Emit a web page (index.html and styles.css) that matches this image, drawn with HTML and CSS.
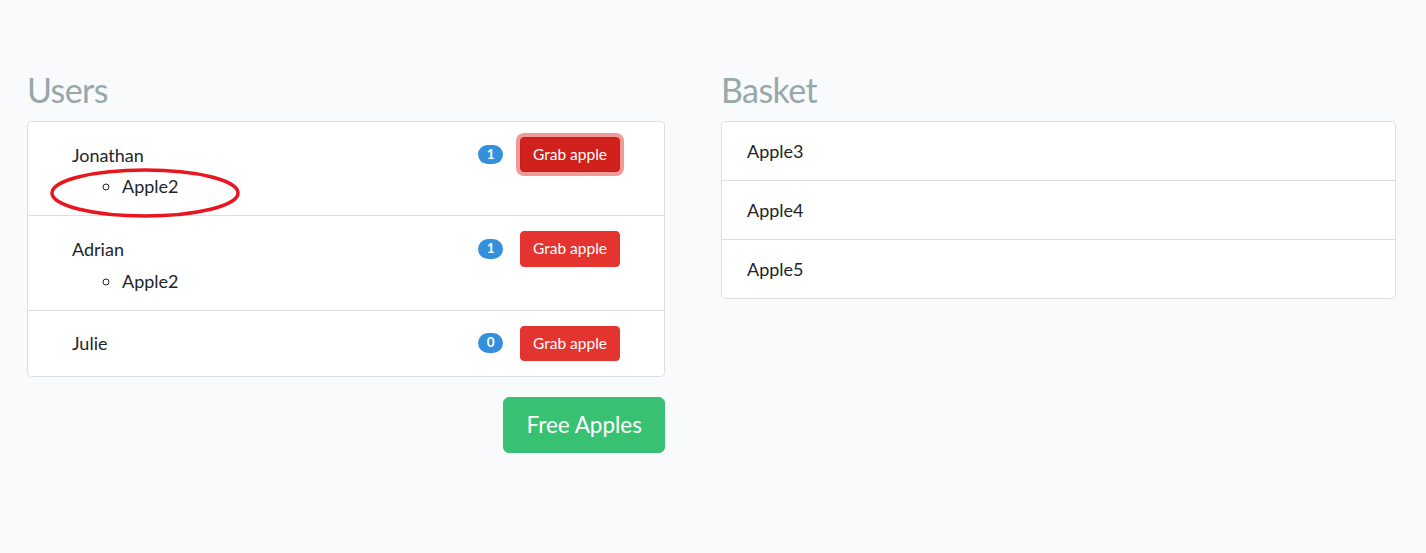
FILE: index.html
```html
<!DOCTYPE html>
<html lang="en">
<head>
<meta charset="utf-8">
<title>Apples</title>
<link rel="stylesheet" href="styles.css">
</head>
<body>
<div class="page">
  <section class="col">
    <h2 class="title">Users</h2>
    <div class="list">
      <div class="user">
        <div class="user-head">
          <span class="name">Jonathan</span>
          <span class="badge">1</span>
          <button class="btn-grab active">Grab apple</button>
        </div>
        <ul class="apples">
          <li>Apple2</li>
        </ul>
        <svg class="mark" width="194" height="54" viewBox="0 0 194 54" aria-hidden="true">
          <ellipse cx="97" cy="27" rx="93" ry="23" fill="none" stroke="#e8161f" stroke-width="3.5"/>
        </svg>
      </div>
      <div class="user">
        <div class="user-head">
          <span class="name">Adrian</span>
          <span class="badge">1</span>
          <button class="btn-grab">Grab apple</button>
        </div>
        <ul class="apples">
          <li>Apple2</li>
        </ul>
      </div>
      <div class="user">
        <div class="user-head">
          <span class="name">Julie</span>
          <span class="badge">0</span>
          <button class="btn-grab">Grab apple</button>
        </div>
      </div>
    </div>
    <div class="actions">
      <button class="btn-free">Free Apples</button>
    </div>
  </section>
  <section class="col">
    <h2 class="title">Basket</h2>
    <div class="list">
      <div class="item">Apple3</div>
      <div class="item">Apple4</div>
      <div class="item">Apple5</div>
    </div>
  </section>
</div>
</body>
</html>
```

FILE: styles.css
```css
html, body {
  margin: 0;
  padding: 0;
}
body {
  background: #f8fafc;
  color: #212529;
  font-family: "Lato", "Noto Sans", sans-serif;
  font-size: 18px;
  line-height: 28px;
}
.page {
  display: grid;
  grid-template-columns: 638px 675px;
  column-gap: 56px;
  padding: 68px 30px 0 27px;
  align-items: start;
}
.col {
  display: flex;
  flex-direction: column;
}
.title {
  margin: 0 0 10px;
  font-size: 34px;
  letter-spacing: -0.6px;
  line-height: 43px;
  font-weight: 400;
  color: #97a8aa;
}
.list {
  background: #fff;
  border: 1px solid rgba(0, 0, 0, 0.125);
  border-radius: 5px;
}
.user {
  position: relative;
  padding: 15px 44px;
  border-bottom: 1px solid rgba(0, 0, 0, 0.125);
}
.user:last-child,
.item:last-child {
  border-bottom: 0;
}
.user-head {
  display: flex;
  align-items: center;
}
.name {
  flex: 1;
}
.badge {
  display: inline-block;
  background: #3490dc;
  color: #fff;
  font-size: 13.5px;
  font-weight: 700;
  line-height: 1;
  padding: 3px 8.5px;
  border-radius: 10px;
}
.btn-grab {
  margin-left: 17px;
  font-family: inherit;
  font-size: 15.5px;
  line-height: 1.5;
  padding: 5px 12px;
  color: #fff;
  background: #e3342f;
  border: 1px solid #e3342f;
  border-radius: 4px;
}
.btn-grab.active {
  background: #d0211c;
  border-color: #c51f1a;
  box-shadow: 0 0 0 4px rgba(227, 52, 47, 0.5);
}
.apples {
  margin: 0;
  padding-left: 50px;
  list-style: circle;
}
.mark {
  position: absolute;
  left: 20px;
  top: 44px;
}
.actions {
  display: flex;
  justify-content: flex-end;
  margin-top: 20px;
}
.btn-free {
  font-family: inherit;
  font-size: 22.5px;
  line-height: 1.5;
  padding: 10px 22px;
  color: #fff;
  background: #38c172;
  border: 1px solid #38c172;
  border-radius: 6px;
}
.item {
  padding: 15px 25px;
  border-bottom: 1px solid rgba(0, 0, 0, 0.125);
}
```
